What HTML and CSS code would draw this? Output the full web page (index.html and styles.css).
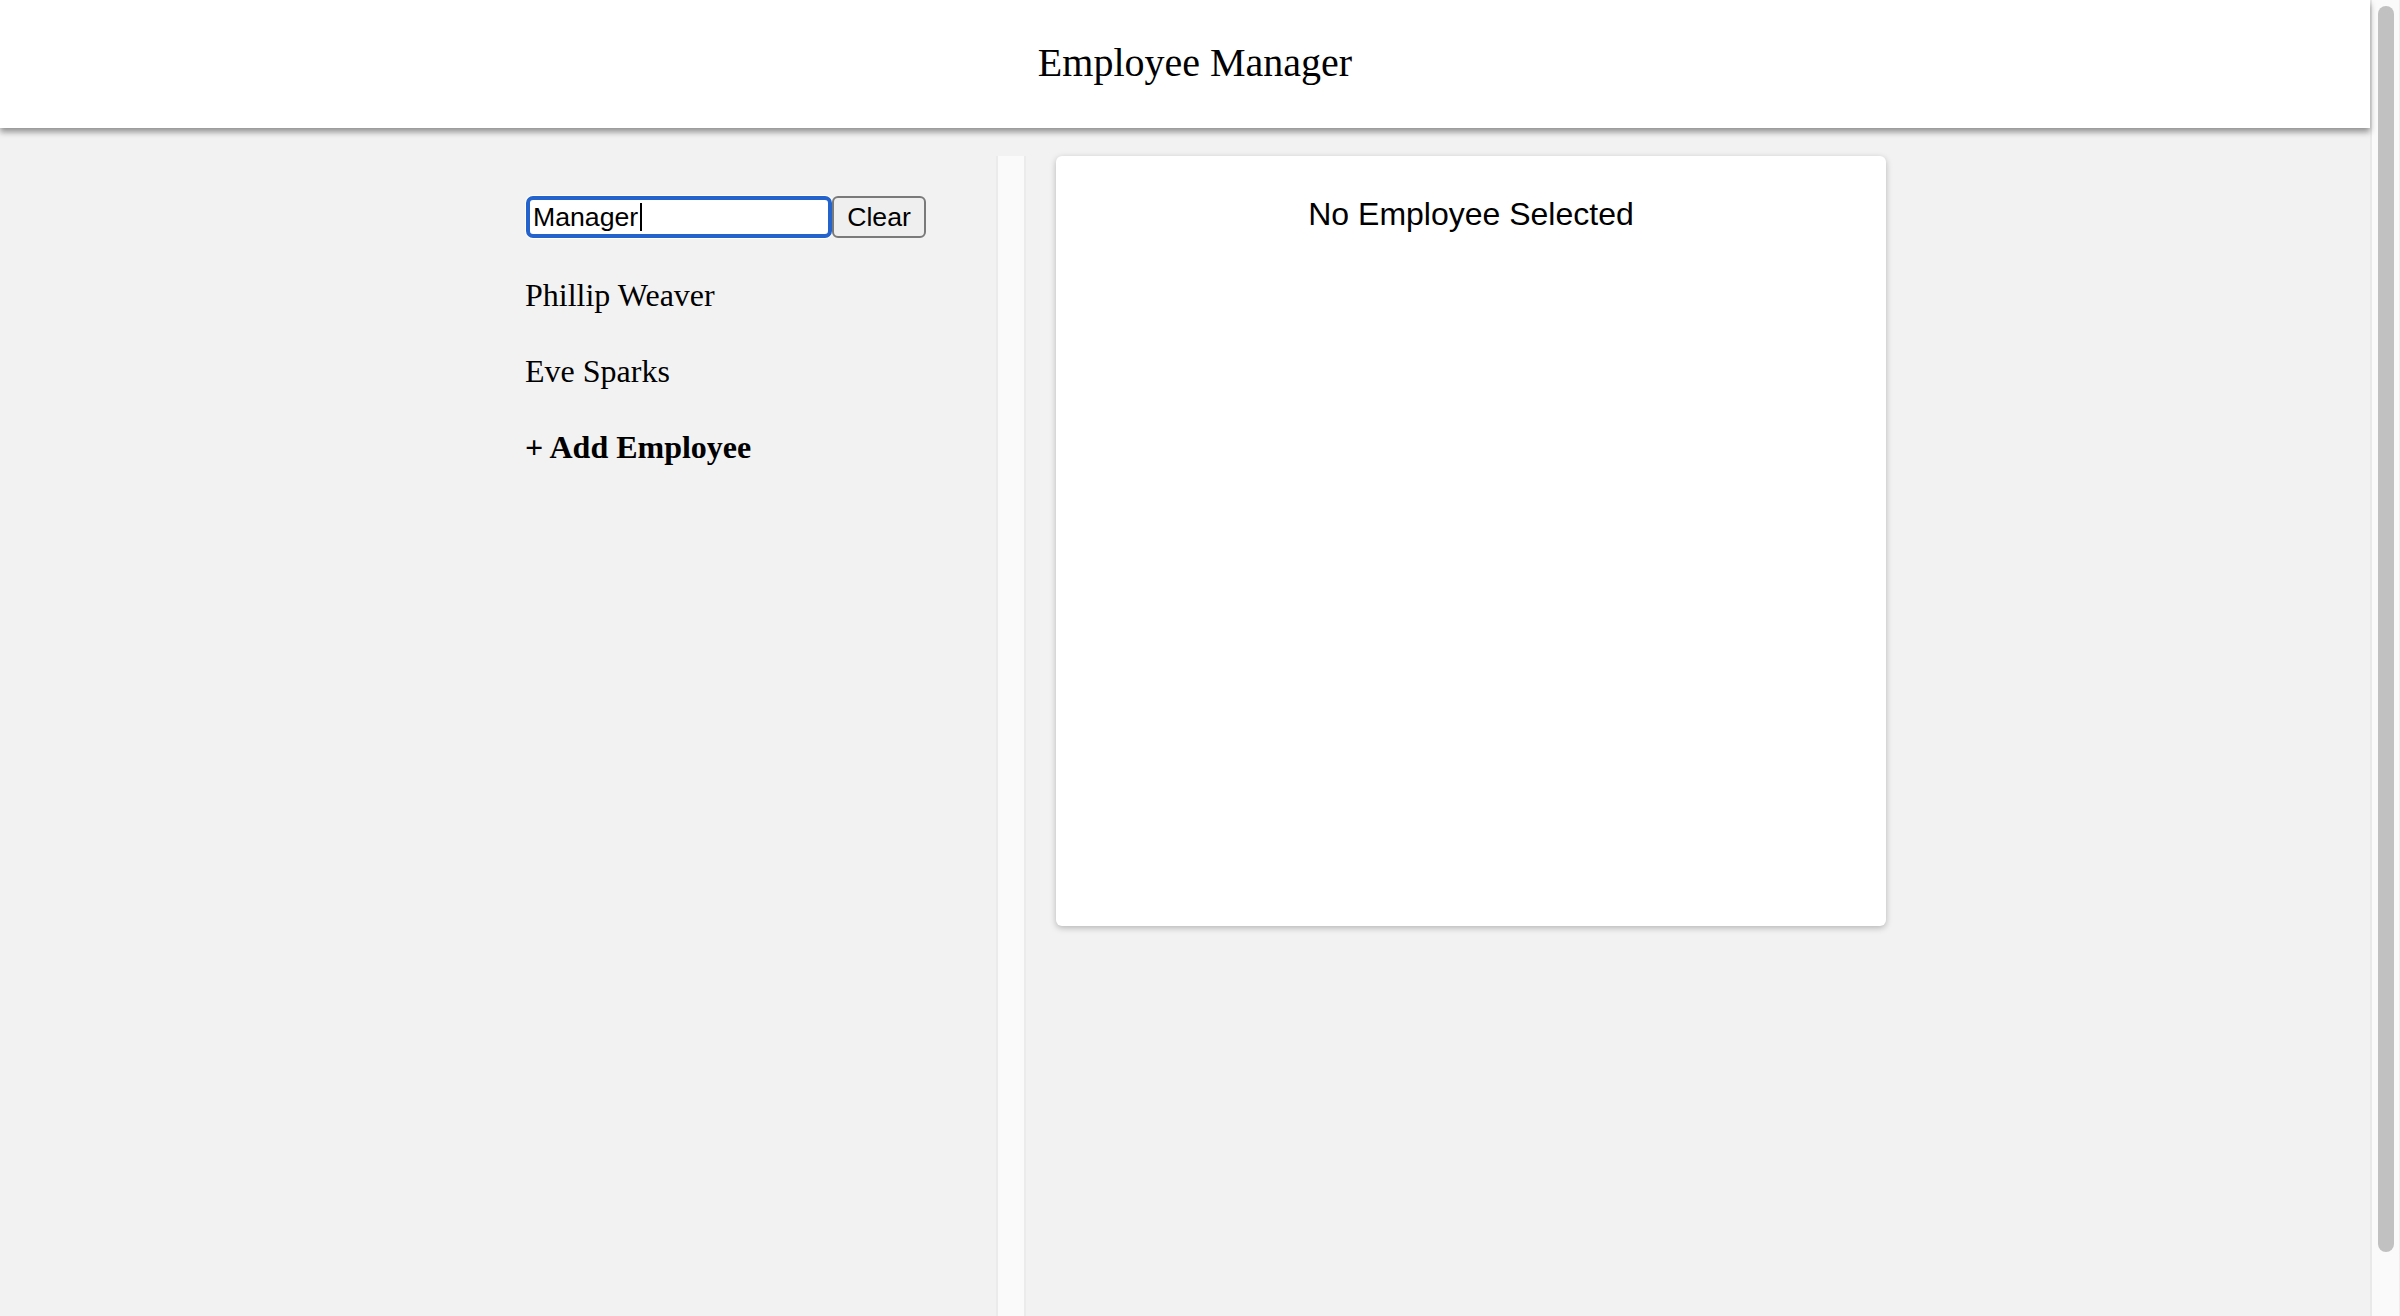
FILE: index.html
```html
<!DOCTYPE html>
<html lang="en">
<head>
<meta charset="utf-8">
<title>Employee Manager</title>
<link rel="stylesheet" href="styles.css">
</head>
<body>
<div class="page">
  <header class="topbar">
    <h1 class="title">Employee Manager</h1>
  </header>
  <main class="layout">
    <aside class="sidebar">
      <div class="search-row">
        <div class="search-field" role="textbox">Manager<span class="caret"></span></div>
        <button class="clear-btn" type="button">Clear</button>
      </div>
      <ul class="employee-list">
        <li class="employee">Phillip Weaver</li>
        <li class="employee">Eve Sparks</li>
        <li class="employee add">+ Add Employee</li>
      </ul>
    </aside>
    <div class="divider"></div>
    <section class="detail-card">
      <h2 class="empty-msg">No Employee Selected</h2>
    </section>
  </main>
</div>
<div class="scrollbar" aria-hidden="true"><div class="scroll-thumb"></div></div>
</body>
</html>
```
FILE: styles.css
```css
html {
  background: #f2f2f2;
}
body {
  margin: 0;
  height: 1316px;
  overflow: hidden;
  display: flex;
  background: #f2f2f2;
  font-family: "Liberation Serif", "Times New Roman", serif;
  color: #000;
}
.page {
  flex: 1;
  min-width: 0;
}
.scrollbar {
  width: 30px;
  flex: none;
  box-sizing: border-box;
  background: #fafafa;
  border-left: 2px solid #e9e9e9;
  border-right: 1px solid #ededed;
  padding: 6px 5px 0 6px;
}
.scroll-thumb {
  width: 16px;
  height: 1246px;
  background: #c1c1c1;
  border-radius: 8px;
}
.topbar {
  height: 128px;
  box-sizing: border-box;
  background: #fff;
  box-shadow: 0 4px 6px rgba(0, 0, 0, 0.4);
  position: relative;
  z-index: 1;
  padding-top: 40px;
}
.title {
  margin: 0;
  font-size: 40px;
  line-height: 46px;
  font-weight: normal;
  text-align: center;
  padding-left: 20px;
}
.layout {
  display: flex;
  justify-content: center;
  height: 1249px;
  box-sizing: border-box;
  padding-top: 28px;
}
.sidebar {
  width: 512px;
  box-sizing: border-box;
  padding-left: 41px;
  padding-top: 40px;
  display: flex;
  flex-direction: column;
  gap: 39px;
}
.search-row {
  display: flex;
  height: 42px;
  margin-left: 1px;
}
.search-field {
  width: 306px;
  height: 42px;
  box-sizing: border-box;
  background: #fff;
  border: 4px solid #2463cb;
  border-radius: 7px;
  box-shadow: 0 0 0 1px #fff;
  font-family: "Liberation Sans", Arial, sans-serif;
  font-size: 26.67px;
  line-height: 34px;
  padding-left: 3px;
  white-space: nowrap;
  display: flex;
  align-items: center;
}
.caret {
  display: inline-block;
  width: 2px;
  height: 28px;
  background: #000;
  margin-left: 2px;
}
.clear-btn {
  width: 94px;
  height: 42px;
  box-sizing: border-box;
  margin: 0;
  padding: 0;
  border: 2px solid #7a7a7a;
  border-radius: 6px;
  background: #efefef;
  color: #000;
  font-family: "Liberation Sans", Arial, sans-serif;
  font-size: 26.67px;
  line-height: 36px;
}
.employee-list {
  list-style: none;
  margin: 0;
  padding: 0;
  display: flex;
  flex-direction: column;
  gap: 39px;
}
.employee {
  font-size: 32px;
  line-height: 37px;
}
.employee.add {
  font-weight: bold;
}
.divider {
  width: 30px;
  box-sizing: border-box;
  background: #fafafa;
  border-left: 2px solid #ebebeb;
  border-right: 2px solid #ebebeb;
}
.detail-card {
  width: 830px;
  height: 770px;
  margin-left: 30px;
  background: #fff;
  border-radius: 6px;
  box-shadow: 0 2px 6px rgba(0, 0, 0, 0.25);
  box-sizing: border-box;
  padding-top: 40px;
}
.empty-msg {
  margin: 0;
  font-family: "Liberation Sans", Arial, sans-serif;
  font-size: 32px;
  line-height: 37px;
  font-weight: normal;
  text-align: center;
}
```
